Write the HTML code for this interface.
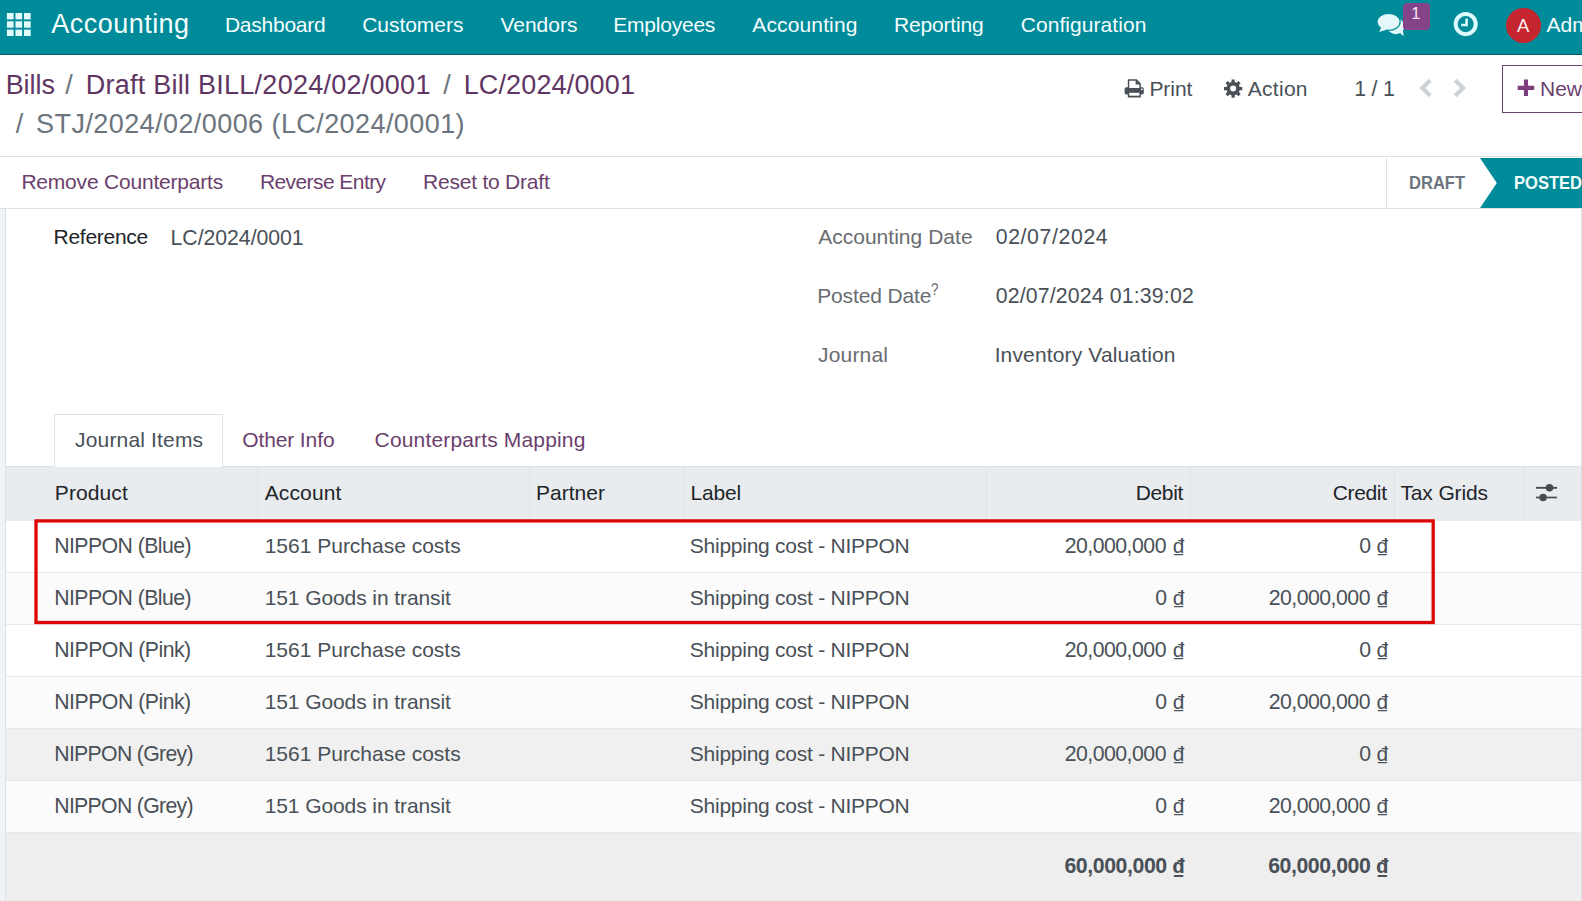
<!DOCTYPE html><html lang="en"><head><meta charset="utf-8"><title>Odoo - STJ/2024/02/0006 (LC/2024/0001)</title><style>
*{box-sizing:border-box;margin:0;padding:0}
html,body{width:1582px;height:901px;overflow:hidden;background:#fff}
body{position:relative;font-family:"Liberation Sans",sans-serif;font-size:21px;color:#495057}
ol,ul{list-style:none}
a{text-decoration:none}
button{background:none;border:0;font-family:inherit}
.t{position:absolute;white-space:pre;line-height:40px;font-style:normal}
.abs{position:absolute}
svg{position:absolute;overflow:visible}
.d{font-family:"Liberation Mono",monospace}
.o_main_navbar{position:absolute;left:0;top:0;width:1582px;height:55px;background:#008b9a;border-bottom:1px solid #0a5863}
.o_control_panel{position:absolute;left:0;top:55px;width:1582px;height:102px;background:#fff;border-bottom:1px solid #dee2e6}
.o_form_statusbar{position:absolute;left:0;top:157px;width:1582px;height:52px;background:#fff;border-bottom:1px solid #dee2e6}
.o_form_sheet_bg{position:absolute;left:0;top:209px;width:1582px;height:692px;background:#f1f4f6}
.o_form_sheet{position:absolute;left:5px;top:0;width:1577px;height:692px;background:#fff;border-left:1px solid #dde1e5;border-right:1px solid #dde1e5}
.badge{position:absolute;background:#85448a;border-radius:4px}
.avatar{position:absolute;border-radius:50%;background:#c4252e}
.btn-new{position:absolute;border:1px solid #6b4468;background:#fff;border-radius:0}
.sep{position:absolute;width:1px;background:#dee2e6}
.nav-tabs{position:absolute;height:1px;background:#dee2e6}
.nav-link.active{position:absolute;border:1px solid #dee2e6;border-bottom:0;background:#fff}
table.o_list_table{position:absolute;border-collapse:separate;border-spacing:0;table-layout:fixed}
thead tr{height:54px;background:#e9ecef}
th+th{border-left:1px solid #dfe3e7}
th,td{position:static;font-weight:400;text-align:left}
tbody tr{height:52px;background:#fff}
tbody tr:nth-child(even){background:#fbfbfb}
tbody tr.hover{background:#f0f0f0}
tbody td{border-bottom:1px solid #e6e8eb}
tfoot tr{height:69px;background:#eeeeee}
</style></head><body>
<header class="o_main_navbar">
<a class="abs" title="Home Menu" style="left:0;top:0;width:40px;height:54px"><svg width="40" height="54" style="left:0;top:0" fill="#e2fcfd"><rect x="6.90" y="13.00" width="6.7" height="6.4"/><rect x="15.45" y="13.00" width="6.7" height="6.4"/><rect x="24.00" y="13.00" width="6.7" height="6.4"/><rect x="6.90" y="21.30" width="6.7" height="6.4"/><rect x="15.45" y="21.30" width="6.7" height="6.4"/><rect x="24.00" y="21.30" width="6.7" height="6.4"/><rect x="6.90" y="29.60" width="6.7" height="6.4"/><rect x="15.45" y="29.60" width="6.7" height="6.4"/><rect x="24.00" y="29.60" width="6.7" height="6.4"/></svg></a>
<nav>
<a class="t" style="left:51.34px;top:4.40px;font-size:27px;color:#f4fdfd;letter-spacing:0.466px;">Accounting</a>
<a class="t" style="left:224.88px;top:4.60px;font-size:21px;color:#f4fdfd;letter-spacing:-0.234px;">Dashboard</a>
<a class="t" style="left:362.17px;top:4.60px;font-size:21px;color:#f4fdfd;letter-spacing:-0.028px;">Customers</a>
<a class="t" style="left:500.43px;top:4.60px;font-size:21px;color:#f4fdfd;letter-spacing:-0.009px;">Vendors</a>
<a class="t" style="left:613.28px;top:4.60px;font-size:21px;color:#f4fdfd;letter-spacing:-0.225px;">Employees</a>
<a class="t" style="left:752.34px;top:4.60px;font-size:21px;color:#f4fdfd;letter-spacing:0.127px;">Accounting</a>
<a class="t" style="left:893.88px;top:4.60px;font-size:21px;color:#f4fdfd;letter-spacing:-0.145px;">Reporting</a>
<a class="t" style="left:1020.67px;top:4.60px;font-size:21px;color:#f4fdfd;letter-spacing:0.067px;">Configuration</a>
</nav>
<div class="o_menu_systray">
<svg width="70" height="44" viewBox="1370 0 70 44" style="left:1370px;top:0" fill="#e4f8f9">
<ellipse cx="1395.700" cy="26.200" rx="8.700" ry="8"/><path d="M1399 32.300L1403.800 36.300L1402.800 29.500Z"/>
<ellipse cx="1388.600" cy="21.850" rx="11" ry="7.950" stroke="#008b9a" stroke-width="2.400"/>
<ellipse cx="1388.600" cy="21.850" rx="11" ry="7.950"/><path d="M1381.300 27.200L1379.200 32.100L1387 29.400Z"/>
</svg>
<span class="badge" style="left:1402.500px;top:3.200px;width:27.200px;height:26.800px"></span>
<span class="t" style="left:1411.200px;top:-4.200px;font-size:16.500px;color:#f6e6f7;line-height:34px">1</span>
<svg width="26" height="26" viewBox="0 0 26 26" style="left:1453px;top:11px" fill="none" stroke="#ddfbfd">
<circle cx="12.700" cy="13.100" r="10.050" stroke-width="4"/><path d="M13.600 7.400v6.500h-5.400" stroke-width="2.500"/></svg>
<span class="avatar" style="left:1506px;top:7.800px;width:35px;height:35.200px"></span>
<span class="t" style="left:1517.04px;top:5.92px;font-size:18.5px;color:#fdeeee;">A</span>
<span class="t" style="left:1546.54px;top:4.60px;font-size:21px;color:#f4fdfd;">Administrator</span>
</div></header>
<div class="o_control_panel">
<ol class="breadcrumb">
<li><a class="t" style="left:5.64px;top:9.50px;font-size:27px;color:#5f3663;letter-spacing:-0.012px;">Bills</a></li><span class="t" style="left:65.37px;top:9.50px;font-size:27px;color:#6c757d;">/</span>
<li><a class="t" style="left:85.64px;top:9.50px;font-size:27px;color:#5f3663;letter-spacing:0.261px;">Draft Bill BILL/2024/02/0001</a></li><span class="t" style="left:443.37px;top:9.50px;font-size:27px;color:#6c757d;">/</span>
<li><a class="t" style="left:463.64px;top:9.50px;font-size:27px;color:#5f3663;letter-spacing:0.150px;">LC/2024/0001</a></li><span class="t" style="left:15.67px;top:49.40px;font-size:27px;color:#6c757d;">/</span>
<li><span class="t" style="left:36.11px;top:49.40px;font-size:27px;color:#6c757d;letter-spacing:0.423px;">STJ/2024/02/0006 (LC/2024/0001)</span></li>
</ol>
<svg width="21" height="20" viewBox="0 0 21 20" style="left:1124px;top:24px" fill="#495057">
<rect x="0.600" y="8.300" width="19.200" height="7.100" rx="1.700"/>
<path d="M3.800 0.200H12.700L16.900 4.400V9.500H3.800Z"/>
<path d="M5.300 1.800H11.600V5.400H15.400V9H5.300Z" fill="#fff"/>
<rect x="3.800" y="12.500" width="13.100" height="5.900" rx="0.600"/>
<rect x="5.300" y="13.800" width="10.100" height="2.900" fill="#fff"/>
<circle cx="17.900" cy="10.300" r="0.900" fill="#fff"/></svg>
<button class="t" style="left:1149.38px;top:13.80px;font-size:21px;color:#495057;letter-spacing:-0.024px;">Print</button>
<svg width="20" height="20" viewBox="0 0 20 20" style="left:1223px;top:23px" fill="#495057"><path fill-rule="evenodd" d="M16.70 8.96 L19.27 9.07 L19.27 12.13 L16.70 12.24 L15.93 14.11 L17.67 16.01 L15.51 18.17 L13.61 16.43 L11.74 17.20 L11.63 19.77 L8.57 19.77 L8.46 17.20 L6.59 16.43 L4.69 18.17 L2.53 16.01 L4.27 14.11 L3.50 12.24 L0.93 12.13 L0.93 9.07 L3.50 8.96 L4.27 7.09 L2.53 5.19 L4.69 3.03 L6.59 4.77 L8.46 4.00 L8.57 1.43 L11.63 1.43 L11.74 4.00 L13.61 4.77 L15.51 3.03 L17.67 5.19 L15.93 7.09Z M13.10 10.60 A3.0 3.0 0 1 0 7.10 10.60 A3.0 3.0 0 1 0 13.10 10.60Z"/></svg>
<button class="t" style="left:1247.74px;top:13.80px;font-size:21px;color:#495057;letter-spacing:0.290px;">Action</button>
<span class="t" style="left:1354.30px;top:13.82px;font-size:21.25px;color:#495057;letter-spacing:-0.222px;">1 / 1</span>
<svg width="60" height="24" viewBox="0 0 60 24" style="left:1416px;top:21px" fill="none" stroke="#cdd2d8" stroke-width="4.200">
<path d="M14.300 4.300L6.300 12l8 7.700"/><path d="M39.100 4.300L47.100 12l-8 7.700"/></svg>
<button class="btn-new" style="left:1502px;top:10px;width:100px;height:48px">
<svg width="18" height="18" viewBox="0 0 18 18" style="left:14px;top:12.8px" fill="#7d3e7d"><path d="M6.900.6h4.100v6.200h6.200v4.100H11v6.200H6.900v-6.200H.7V6.800h6.200z"/></svg>
<span class="t" style="left:36.98px;top:2.80px;font-size:21px;color:#6b3f6d;">New</span>
</button>
</div>
<div class="o_form_statusbar">
<button class="t" style="left:21.38px;top:4.90px;font-size:21px;color:#6b3f6d;letter-spacing:-0.202px;">Remove Counterparts</button>
<button class="t" style="left:259.88px;top:4.90px;font-size:21px;color:#6b3f6d;letter-spacing:-0.571px;">Reverse Entry</button>
<button class="t" style="left:423.08px;top:4.90px;font-size:21px;color:#6b3f6d;letter-spacing:-0.222px;">Reset to Draft</button>
<span class="sep" style="left:1386px;top:1px;height:50px"></span>
<svg width="110" height="50" viewBox="0 0 110 50" style="left:1480px;top:1px"><path d="M0 0H110V50H0L16.800 25Z" fill="#008b9a"/></svg>
<span class="t" style="left:1409.47px;top:5.60px;font-size:18px;color:#6c757d;font-weight:700;display:inline-block;transform-origin:0 0;transform:scaleX(0.9199);">DRAFT</span>
<span class="t" style="left:1513.77px;top:5.60px;font-size:18px;color:#f4fdfd;font-weight:700;display:inline-block;transform-origin:0 0;transform:scaleX(0.9189);">POSTED</span>
</div>
<div class="o_form_sheet_bg"><main class="o_form_sheet">
<div class="o_group">
<label class="t" style="left:47.58px;top:8.00px;font-size:21px;color:#212529;letter-spacing:-0.279px;">Reference</label>
<span class="t" style="left:164.55px;top:8.62px;font-size:21.25px;color:#495057;letter-spacing:-0.034px;">LC/2024/0001</span>
<label class="t" style="left:812.14px;top:7.70px;font-size:21px;color:#696c70;letter-spacing:0.025px;">Accounting Date</label>
<span class="t" style="left:989.71px;top:7.72px;font-size:21.25px;color:#495057;letter-spacing:0.626px;">02/07/2024</span>
<label class="t" style="left:811.18px;top:66.60px;font-size:21px;color:#696c70;letter-spacing:-0.134px;">Posted Date</label>
<sup class="t" style="left:925.34px;top:60.15px;font-size:16.5px;color:#696c70;display:inline-block;transform-origin:0 0;transform:scaleX(0.8084);">?</sup>
<span class="t" style="left:989.71px;top:66.62px;font-size:21.25px;color:#495057;letter-spacing:0.169px;">02/07/2024 01:39:02</span>
<label class="t" style="left:812.10px;top:125.80px;font-size:21px;color:#696c70;letter-spacing:0.165px;">Journal</label>
<span class="t" style="left:988.65px;top:125.80px;font-size:21px;color:#495057;letter-spacing:0.143px;">Inventory Valuation</span>
</div>
<div class="nav-tabs" style="left:0px;top:257px;width:1575px"></div>
<div class="nav-link active" style="left:48px;top:205px;width:169px;height:53px"></div>
<a class="t" style="left:69.10px;top:211.40px;font-size:21px;color:#495057;letter-spacing:0.165px;">Journal Items</a>
<a class="t" style="left:236.19px;top:211.40px;font-size:21px;color:#6b3f6d;letter-spacing:-0.112px;">Other Info</a>
<a class="t" style="left:368.57px;top:211.40px;font-size:21px;color:#6b3f6d;letter-spacing:0.160px;">Counterparts Mapping</a>
<table class="o_list_table" style="left:0px;top:258px;width:1575px">
<thead><tr>
<th style="width:251px"><span class="t" style="left:48.78px;top:5.70px;font-size:21px;color:#212529;letter-spacing:0.112px;">Product</span></th>
<th style="width:272px"><span class="t" style="left:258.64px;top:5.70px;font-size:21px;color:#212529;letter-spacing:0.156px;">Account</span></th>
<th style="width:155px"><span class="t" style="left:529.88px;top:5.70px;font-size:21px;color:#212529;letter-spacing:0.035px;">Partner</span></th>
<th style="width:302px"><span class="t" style="left:684.58px;top:5.70px;font-size:21px;color:#212529;letter-spacing:-0.190px;">Label</span></th>
<th style="width:204px"><span class="t" style="left:1129.78px;top:5.70px;font-size:21px;color:#212529;letter-spacing:-0.374px;">Debit</span></th>
<th style="width:204px"><span class="t" style="left:1326.77px;top:5.70px;font-size:21px;color:#212529;letter-spacing:-0.357px;">Credit</span></th>
<th style="width:130px"><span class="t" style="left:1394.41px;top:5.70px;font-size:21px;color:#212529;letter-spacing:-0.132px;">Tax Grids</span></th>
<th style="width:57px"><svg width="24" height="20" viewBox="0 0 24 20" style="left:1529px;top:16px" fill="#454c54">
<rect x="0.900" y="3.850" width="21.150" height="1.900"/><rect x="0.900" y="13.650" width="21.150" height="1.700"/>
<circle cx="14.500" cy="4.800" r="3.750"/><circle cx="8.100" cy="14.500" r="3.750"/></svg></th>
</tr></thead><tbody>
<tr>
<td><span class="t" style="left:48.25px;top:58.82px;font-size:21.25px;color:#495057;letter-spacing:-0.568px;">NIPPON (Blue)</span></td>
<td><span class="t" style="left:258.70px;top:58.80px;font-size:21px;color:#495057;letter-spacing:-0.007px;">1561 Purchase costs</span></td>
<td></td>
<td><span class="t" style="left:683.84px;top:58.80px;font-size:21px;color:#495057;letter-spacing:-0.254px;">Shipping cost - NIPPON</span></td>
<td><span class="t" style="left:1058.69px;top:58.82px;font-size:21.25px;color:#495057;letter-spacing:-0.510px;">20,000,000</span><span class="t" style="left:1166.21px;top:58.80px;font-size:21px;color:#495057;"><span class="d">₫</span></span></td>
<td><span class="t" style="left:1353.21px;top:58.82px;font-size:21.25px;color:#495057;">0</span><span class="t" style="left:1370.01px;top:58.80px;font-size:21px;color:#495057;"><span class="d">₫</span></span></td>
<td></td><td></td></tr>
<tr>
<td><span class="t" style="left:48.25px;top:110.82px;font-size:21.25px;color:#495057;letter-spacing:-0.568px;">NIPPON (Blue)</span></td>
<td><span class="t" style="left:258.70px;top:110.80px;font-size:21px;color:#495057;letter-spacing:-0.091px;">151 Goods in transit</span></td>
<td></td>
<td><span class="t" style="left:683.84px;top:110.80px;font-size:21px;color:#495057;letter-spacing:-0.254px;">Shipping cost - NIPPON</span></td>
<td><span class="t" style="left:1149.21px;top:110.82px;font-size:21.25px;color:#495057;">0</span><span class="t" style="left:1166.21px;top:110.80px;font-size:21px;color:#495057;"><span class="d">₫</span></span></td>
<td><span class="t" style="left:1262.69px;top:110.82px;font-size:21.25px;color:#495057;letter-spacing:-0.510px;">20,000,000</span><span class="t" style="left:1370.01px;top:110.80px;font-size:21px;color:#495057;"><span class="d">₫</span></span></td>
<td></td><td></td></tr>
<tr>
<td><span class="t" style="left:48.25px;top:162.82px;font-size:21.25px;color:#495057;letter-spacing:-0.497px;">NIPPON (Pink)</span></td>
<td><span class="t" style="left:258.70px;top:162.80px;font-size:21px;color:#495057;letter-spacing:-0.007px;">1561 Purchase costs</span></td>
<td></td>
<td><span class="t" style="left:683.84px;top:162.80px;font-size:21px;color:#495057;letter-spacing:-0.254px;">Shipping cost - NIPPON</span></td>
<td><span class="t" style="left:1058.69px;top:162.82px;font-size:21.25px;color:#495057;letter-spacing:-0.510px;">20,000,000</span><span class="t" style="left:1166.21px;top:162.80px;font-size:21px;color:#495057;"><span class="d">₫</span></span></td>
<td><span class="t" style="left:1353.21px;top:162.82px;font-size:21.25px;color:#495057;">0</span><span class="t" style="left:1370.01px;top:162.80px;font-size:21px;color:#495057;"><span class="d">₫</span></span></td>
<td></td><td></td></tr>
<tr>
<td><span class="t" style="left:48.25px;top:214.82px;font-size:21.25px;color:#495057;letter-spacing:-0.497px;">NIPPON (Pink)</span></td>
<td><span class="t" style="left:258.70px;top:214.80px;font-size:21px;color:#495057;letter-spacing:-0.091px;">151 Goods in transit</span></td>
<td></td>
<td><span class="t" style="left:683.84px;top:214.80px;font-size:21px;color:#495057;letter-spacing:-0.254px;">Shipping cost - NIPPON</span></td>
<td><span class="t" style="left:1149.21px;top:214.82px;font-size:21.25px;color:#495057;">0</span><span class="t" style="left:1166.21px;top:214.80px;font-size:21px;color:#495057;"><span class="d">₫</span></span></td>
<td><span class="t" style="left:1262.69px;top:214.82px;font-size:21.25px;color:#495057;letter-spacing:-0.510px;">20,000,000</span><span class="t" style="left:1370.01px;top:214.80px;font-size:21px;color:#495057;"><span class="d">₫</span></span></td>
<td></td><td></td></tr>
<tr class="hover">
<td><span class="t" style="left:48.25px;top:266.82px;font-size:21.25px;color:#495057;letter-spacing:-0.693px;">NIPPON (Grey)</span></td>
<td><span class="t" style="left:258.70px;top:266.80px;font-size:21px;color:#495057;letter-spacing:-0.007px;">1561 Purchase costs</span></td>
<td></td>
<td><span class="t" style="left:683.84px;top:266.80px;font-size:21px;color:#495057;letter-spacing:-0.254px;">Shipping cost - NIPPON</span></td>
<td><span class="t" style="left:1058.69px;top:266.82px;font-size:21.25px;color:#495057;letter-spacing:-0.510px;">20,000,000</span><span class="t" style="left:1166.21px;top:266.80px;font-size:21px;color:#495057;"><span class="d">₫</span></span></td>
<td><span class="t" style="left:1353.21px;top:266.82px;font-size:21.25px;color:#495057;">0</span><span class="t" style="left:1370.01px;top:266.80px;font-size:21px;color:#495057;"><span class="d">₫</span></span></td>
<td></td><td></td></tr>
<tr>
<td><span class="t" style="left:48.25px;top:318.82px;font-size:21.25px;color:#495057;letter-spacing:-0.693px;">NIPPON (Grey)</span></td>
<td><span class="t" style="left:258.70px;top:318.80px;font-size:21px;color:#495057;letter-spacing:-0.091px;">151 Goods in transit</span></td>
<td></td>
<td><span class="t" style="left:683.84px;top:318.80px;font-size:21px;color:#495057;letter-spacing:-0.254px;">Shipping cost - NIPPON</span></td>
<td><span class="t" style="left:1149.21px;top:318.82px;font-size:21.25px;color:#495057;">0</span><span class="t" style="left:1166.21px;top:318.80px;font-size:21px;color:#495057;"><span class="d">₫</span></span></td>
<td><span class="t" style="left:1262.69px;top:318.82px;font-size:21.25px;color:#495057;letter-spacing:-0.510px;">20,000,000</span><span class="t" style="left:1370.01px;top:318.80px;font-size:21px;color:#495057;"><span class="d">₫</span></span></td>
<td></td><td></td></tr>
</tbody><tfoot><tr><td></td><td></td><td></td><td></td>
<td><span class="t" style="left:1058.43px;top:378.90px;font-size:21.25px;color:#495057;font-weight:700;letter-spacing:-0.404px;">60,000,000</span><span class="t" style="left:1166.25px;top:378.90px;font-size:21px;color:#495057;font-weight:700;"><span class="d">₫</span></span></td>
<td><span class="t" style="left:1262.13px;top:378.90px;font-size:21.25px;color:#495057;font-weight:700;letter-spacing:-0.404px;">60,000,000</span><span class="t" style="left:1370.05px;top:378.90px;font-size:21px;color:#495057;font-weight:700;"><span class="d">₫</span></span></td>
<td></td><td></td></tr></tfoot></table>
</main></div>
<svg width="1582" height="901" viewBox="0 0 1582 901" style="left:0;top:0;pointer-events:none"><rect x="36" y="520.900" width="1397.200" height="101.600" fill="none" stroke="#dd0606" stroke-width="3.300"/></svg>
</body></html>
